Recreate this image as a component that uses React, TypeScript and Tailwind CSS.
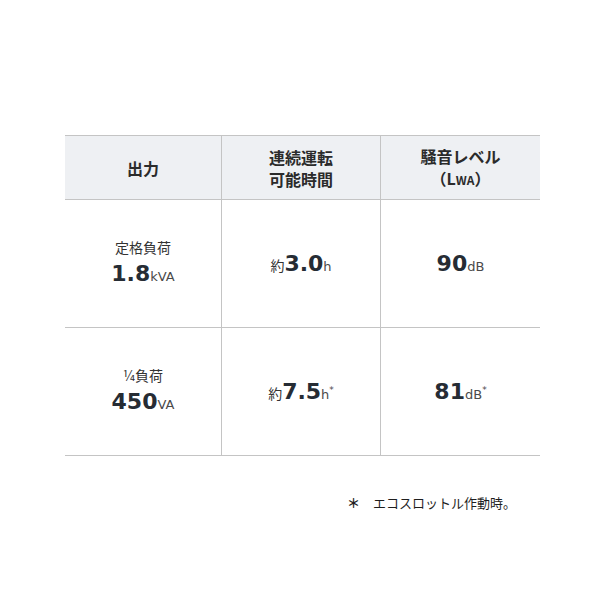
import React from "react";

const JP = "font-['Noto_Sans_CJK_JP','Noto_Sans',sans-serif]";
const NUM = "font-['DejaVu_Sans','Verdana',sans-serif]";

function Num({ value, unit, star }: { value: string; unit: string; star?: boolean }) {
  return (
    <span className="whitespace-nowrap">
      <span className={`${NUM} text-[22px] font-bold text-[#262c34]`}>{value}</span>
      <span className={`${NUM} text-[13px] text-[#4a4a4a]`}>{unit}</span>
      {star && <span className={`${NUM} relative -top-[6px] text-[9px] text-[#4a4a4a]`}>*</span>}
    </span>
  );
}

function Cell({ children, last }: { children: React.ReactNode; last?: boolean }) {
  return (
    <div
      className={`flex h-[128px] flex-col items-center justify-center border-b border-[#c4c4c4] ${
        last ? "" : "border-r"
      }`}
    >
      {children}
    </div>
  );
}

export default function App() {
  return (
    <div className={`h-[600px] w-[600px] bg-white pt-[135px] ${JP}`}>
      <div className="ml-[65px] w-[475px]">
        <div className="grid grid-cols-[157px_159px_159px] border-t border-[#c4c4c4]">
          {/* header */}
          <div className="flex h-[64px] items-center justify-center border-b border-r border-[#c4c4c4] bg-[#eef0f3] text-[16px] font-bold text-[#2b2b2b]">
            出力
          </div>
          <div className="flex h-[64px] flex-col items-center justify-center border-b border-r border-[#c4c4c4] bg-[#eef0f3] text-[16px] font-bold leading-[22px] text-[#2b2b2b]">
            <span>連続運転</span>
            <span>可能時間</span>
          </div>
          <div className="flex h-[64px] flex-col items-center justify-center border-b border-[#c4c4c4] bg-[#eef0f3] text-[16px] font-bold leading-[22px] text-[#2b2b2b]">
            <span>騒音レベル</span>
            <span>
              （L<span className="text-[12px]">WA</span>）
            </span>
          </div>

          {/* row 1 */}
          <Cell>
            <span className="text-[14px] leading-[20px] text-[#333]">定格負荷</span>
            <Num value="1.8" unit="kVA" />
          </Cell>
          <Cell>
            <span className="flex items-baseline">
              <span className="text-[14px] text-[#333]">約</span>
              <Num value="3.0" unit="h" />
            </span>
          </Cell>
          <Cell last>
            <Num value="90" unit="dB" />
          </Cell>

          {/* row 2 */}
          <Cell>
            <span className="text-[14px] leading-[20px] text-[#333]">¼負荷</span>
            <Num value="450" unit="VA" />
          </Cell>
          <Cell>
            <span className="flex items-baseline">
              <span className="text-[14px] text-[#333]">約</span>
              <Num value="7.5" unit="h" star />
            </span>
          </Cell>
          <Cell last>
            <Num value="81" unit="dB" star />
          </Cell>
        </div>

        <div className="mt-[37px] flex justify-end pr-[24px] text-[13px] text-[#1e1e1e]">
          <span className="mr-[13px] font-bold">＊</span>
          <span>エコスロットル作動時。</span>
        </div>
      </div>
    </div>
  );
}
